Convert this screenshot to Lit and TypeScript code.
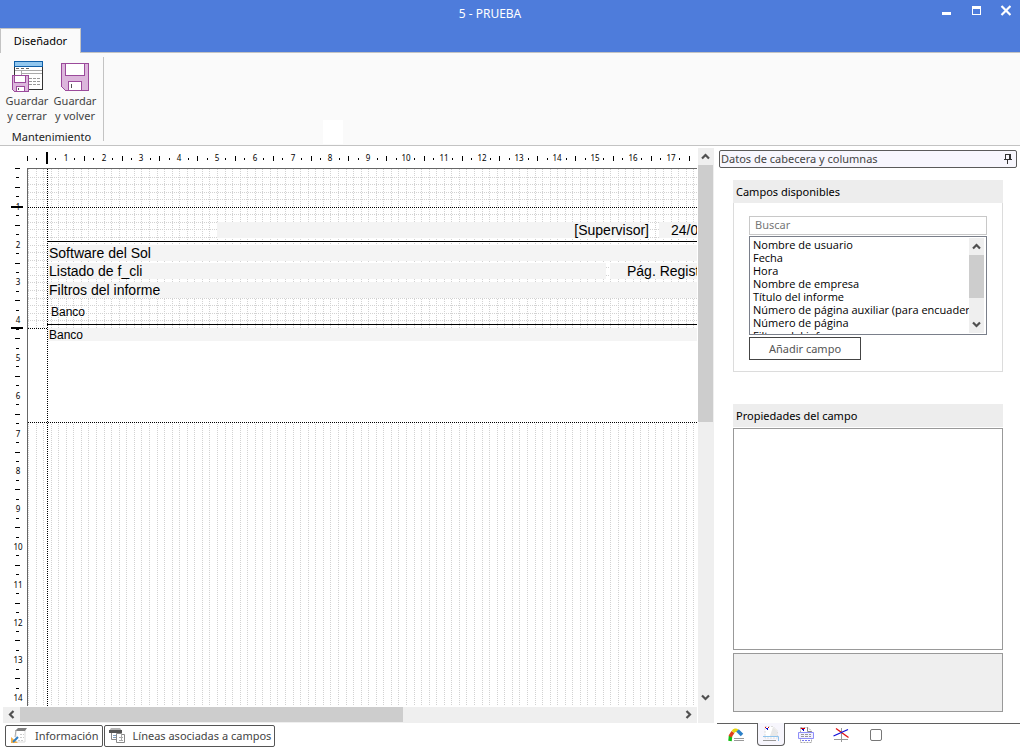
import { LitElement, html, svg, css } from "lit";
import { customElement, state } from "lit/decorators.js";

/** Pixels per centimetre on the design surface. */
const CM = 37.8;
/** Spacing of the snap grid (2 mm). */
const GRID = CM / 5;

const base = css`
  * { box-sizing: border-box; }
  button, input, select {
    font: inherit;
    color: inherit;
    margin: 0;
  }
  button {
    background: none;
    border: 0;
    padding: 0;
    cursor: default;
  }
  svg { display: block; }
`;

const range = (n: number) => Array.from({ length: Math.max(0, n) }, (_, i) => i);

const arrow = (d: string) => html`
  <svg width="9" height="9" viewBox="0 0 9 9" aria-hidden="true">
    <path d=${d} fill="none" stroke="#505050" stroke-width="2.2" />
  </svg>`;
const UP = "M1 6.5L4.5 3L8 6.5";
const DOWN = "M1 2.5L4.5 6L8 2.5";
const LEFT = "M6.5 1L3 4.5L6.5 8";
const RIGHT = "M2.5 1L6 4.5L2.5 8";

@customElement("scroll-track")
class ScrollTrack extends LitElement {
  static properties = { horizontal: { type: Boolean, reflect: true }, size: { type: String } };
  declare horizontal: boolean;
  declare size: string;

  static styles = [base, css`
    :host {
      display: flex;
      flex-direction: column;
      width: 15px;
      background: #efefef;
    }
    :host([horizontal]) {
      flex-direction: row;
      width: auto;
      height: 16px;
    }
    .arrow {
      flex: none;
      width: 15px;
      height: 17px;
      display: grid;
      place-items: center;
    }
    :host([horizontal]) .arrow { width: 17px; height: 15px; }
    .rail { flex: 1; min-height: 0; min-width: 0; }
    .thumb { background: #cdcdcd; width: 15px; height: 100%; }
    :host([horizontal]) .thumb { height: 15px; }
  `];

  render() {
    const h = this.horizontal;
    return html`
      <button class="arrow" tabindex="-1" aria-label=${h ? "Izquierda" : "Arriba"}>${arrow(h ? LEFT : UP)}</button>
      <div class="rail"><div class="thumb" style=${h ? `width:${this.size}` : `height:${this.size}`}></div></div>
      <button class="arrow" tabindex="-1" aria-label=${h ? "Derecha" : "Abajo"}>${arrow(h ? RIGHT : DOWN)}</button>
    `;
  }
}

@customElement("title-bar")
class TitleBar extends LitElement {
  static styles = [base, css`
    :host { display: block; background: #4e7cdb; color: #fff; }
    .row { display: flex; height: 28px; padding-left: 50px; }
    h1 {
      flex: 1;
      margin: 0;
      font-size: 12px;
      font-weight: 400;
      line-height: 28px;
      text-align: center;
    }
    .control { width: 30px; height: 22px; display: grid; place-items: center; }
    .tabs { display: flex; height: 25px; border-bottom: 1px solid #c3c3c3; }
    .tab {
      width: 81px;
      height: 25px;
      padding-bottom: 1px;
      background: #fafafa;
      border: 1px solid #c3c3c3;
      border-bottom: 0;
      color: #000;
    }
  `];

  render() {
    return html`
      <div class="row">
        <h1>5 - PRUEBA</h1>
        <button class="control" aria-label="Minimizar">
          <svg width="12" height="12" viewBox="0 0 12 12"><path d="M3 7h9v3H3z" fill="#fff" /></svg>
        </button>
        <button class="control" aria-label="Maximizar">
          <svg width="12" height="12" viewBox="0 0 12 12"><path fill-rule="evenodd" d="M3 1h9v9H3zM4 4v5h7V4z" fill="#fff" /></svg>
        </button>
        <button class="control" aria-label="Cerrar">
          <svg width="12" height="12" viewBox="0 0 12 12"><path d="M2.500 1L11.500 10M11.500 1L2.500 10" stroke="#fff" stroke-width="2.2" /></svg>
        </button>
      </div>
      <div class="tabs"><button class="tab">Diseñador</button></div>
    `;
  }
}

@customElement("ribbon-bar")
class RibbonBar extends LitElement {
  static styles = [base, css`
    :host {
      display: flex;
      height: 93px;
      background: #fafafa;
      border-bottom: 1px solid #c3c3c3;
    }
    .group {
      width: 104px;
      margin: 4px 0;
      padding-left: 3px;
      border-right: 1px solid #c3c3c3;
    }
    .tools { display: flex; }
    .tool {
      width: 48px;
      height: 69px;
      display: flex;
      flex-direction: column;
      align-items: center;
      padding-top: 3px;
      line-height: 15px;
      color: #444;
    }
    .caption { width: 97px; text-align: center; line-height: 16px; color: #222; margin-top: 3px; }
    .slot { width: 20px; height: 24px; margin: 0 0 1px 219px; align-self: flex-end; background: #fff; }
  `];

  render() {
    return html`
      <div class="group">
        <div class="tools">
          <button class="tool">
            <svg width="32" height="33" viewBox="0 0 32 33" shape-rendering="crispEdges">
              <path d="M3.500 6.500H31.500V29.500H3.500z" fill="#fff" stroke="#333" />
              <path d="M3.500 1.500H31.500V6.500H3.500z" fill="#92c7ee" stroke="#0f5fa8" />
              <path d="M5 8.500h3M10 8.500h3M15 8.500h3" stroke="#666" />
              <path d="M4 10.500h27M10 13.500h21M10.500 11v5" stroke="#aaa" />
              <path d="M18 18.500h3M22 18.500h3M26 18.500h3M18 21.500h3M22 21.500h3M26 21.500h3M18 24.500h3M22 24.500h3M26 24.500h3" stroke="#999" />
              <path d="M1.500 15.500H17.500V31.500H3.500L1.500 29.500z" fill="#dcb6dc" stroke="#9b4a9b" />
              <path d="M3.500 15.500H14.500V22.500H3.500zM5.500 26.500H13.500V31.500H5.500z" fill="#fff" stroke="#9b4a9b" />
              <path d="M7.500 28v2" stroke="#555" />
            </svg>
            <span>Guardar<br />y cerrar</span>
          </button>
          <button class="tool">
            <svg width="32" height="33" viewBox="0 0 32 33" shape-rendering="crispEdges">
              <path d="M2.500 3.500H29.500V30.500H6.500L2.500 26.500z" fill="#dcb6dc" stroke="#9b4a9b" />
              <path d="M6.500 3.500H25.500V15.500H6.500zM9.500 21.500H22.500V30.500H9.500z" fill="#fff" stroke="#9b4a9b" />
              <path d="M12.500 24v4" stroke="#555" />
            </svg>
            <span>Guardar<br />y volver</span>
          </button>
        </div>
        <div class="caption">Mantenimiento</div>
      </div>
      <div class="slot"></div>
    `;
  }
}

@customElement("report-designer")
class ReportDesigner extends LitElement {
  @state() private viewWidth = 0;
  @state() private viewHeight = 0;

  private observer = new ResizeObserver(() => this.measure());

  private measure() {
    this.viewWidth = this.clientWidth;
    this.viewHeight = this.clientHeight;
  }

  connectedCallback() {
    super.connectedCallback();
    this.observer.observe(this);
  }

  disconnectedCallback() {
    this.observer.disconnect();
    super.disconnectedCallback();
  }

  firstUpdated() {
    this.measure();
  }

  static styles = [base, css`
    :host {
      display: grid;
      grid-template-columns: 27px minmax(0, 1fr) 17px;
      grid-template-rows: 22px minmax(0, 1fr) 17px;
      min-width: 0;
      min-height: 0;
    }
    .ruler { overflow: hidden; min-width: 0; min-height: 0; }
    .ruler-top { grid-column: 1 / 3; grid-row: 1; }
    .ruler-left { grid-column: 1; grid-row: 2; }
    .label { font: 8px "Noto Sans", sans-serif; fill: #000; text-anchor: middle; }
    .surface {
      grid-column: 2;
      grid-row: 2;
      display: grid;
      overflow: hidden;
      border: solid #666;
      border-width: 1px 0 0 1px;
      min-width: 0;
      min-height: 0;
      font-family: "Liberation Sans", Arial, sans-serif;
      font-size: 14px;
      color: #000;
      white-space: nowrap;
    }
    .surface > * { grid-area: 1 / 1; min-width: 0; min-height: 0; }
    .bands { padding-left: 20px; overflow: hidden; }
    .margin { height: 39px; }
    .header { padding-top: 14px; }
    .row { display: flex; gap: 4px; height: 16px; width: 740px; line-height: 17px; }
    .field { background: #f4f4f4; padding: 0 1px; }
    .grow { flex: 1; }
    .first { padding-left: 169px; gap: 10px; }
    .user { width: 432px; text-align: right; padding: 0; }
    .date { padding-left: 12px; }
    .rule { height: 1px; background: #000; margin: 3px 0 3px -1px; }
    .company { margin-bottom: 2px; }
    .list { margin-bottom: 3px; }
    .title { width: 558px; }
    .page { padding-left: 17px; }
    .column { height: 26px; margin-bottom: -3px; padding: 0 3px; font-size: 12px; line-height: 29px; }
    .detail { height: 13px; line-height: 15px; font-size: 12px; }
    .bar-v {
      grid-column: 3;
      grid-row: 1 / 4;
      margin: 2px 0 0 1px;
      display: flex;
      flex-direction: column;
      background: #efefef;
    }
    .bar-v scroll-track { flex: 1; min-height: 0; }
    .corner { height: 17px; }
    .bar-h { grid-column: 1 / 3; grid-row: 3; margin: 0 0 0 3px; padding-top: 1px; }
  `];

  private topRuler() {
    const count = Math.floor(((this.viewWidth - 46) / CM) * 4) + 1;
    return svg`${range(count).map((i) => {
      const x = Math.round(28 + (i * CM) / 4);
      if (i === 2) return svg`<rect x="46" y="6" width="2" height="12" />`;
      if (i && i % 4 === 0) return svg`<text class="label" x=${x} y="15">${i / 4}</text>`;
      return i % 2
        ? svg`<rect x=${x - 1} y="12" width="1" height="2" />`
        : svg`<rect x=${x - 1} y="10" width="1" height="5" />`;
    })}`;
  }

  private leftRuler() {
    const count = Math.floor(((this.viewHeight - 46) / CM) * 4) + 1;
    return svg`
      ${range(count).map((i) => {
        const y = Math.round((i * CM) / 4);
        if (i && i % 4 === 0) return svg`<text class="label" x="18" y=${y + 4}>${i / 4}</text>`;
        return i % 2
          ? svg`<rect x="16" y=${y} width="3" height="1" />`
          : svg`<rect x="15" y=${y} width="5" height="1" />`;
      })}
      <rect x="11" y="38" width="12" height="2" />
      <rect x="11" y="159" width="12" height="2" />`;
  }

  private grid() {
    const cols = range(Math.ceil(this.viewWidth / GRID)).map((i) => Math.round(i * GRID) + 0.5);
    const rows = range(21).slice(1).map((i) => Math.round(i * GRID) + 0.5).filter((y) => y !== 38.5);
    return svg`
      <g stroke="#d2d2d2" stroke-dasharray="1 1">
        ${cols.map((x) => svg`<path d=${`M${x} 0V159M${x} 255V2400`} />`)}
        ${rows.map((y) => svg`<path d=${`M0 ${y}H2400`} />`)}
      </g>
      <g stroke="#000" stroke-dasharray="1 1">
        <path d="M0 38.500H2400" />
        <path d="M0 159.500H20" />
        <path d="M0 253.500H2400" />
        <path d="M19.500 0V2400" />
      </g>`;
  }

  render() {
    return html`
      <div class="ruler ruler-top">
        <svg width="100%" height="22" aria-hidden="true">${this.topRuler()}</svg>
      </div>
      <div class="ruler ruler-left">
        <svg width="27" height="100%" aria-hidden="true">${this.leftRuler()}</svg>
      </div>
      <div class="surface">
        <svg width="100%" height="100%" shape-rendering="crispEdges" aria-hidden="true">${this.grid()}</svg>
        <div class="bands">
          <div class="margin"></div>
          <div class="header">
            <div class="row first">
              <div class="field user">[Supervisor]</div>
              <div class="field date grow">24/06</div>
            </div>
            <div class="rule"></div>
            <div class="row company"><div class="field grow">Software del Sol</div></div>
            <div class="row list">
              <div class="field title">Listado de f_cli</div>
              <div class="field page grow">Pág. Regist</div>
            </div>
            <div class="row"><div class="field grow">Filtros del informe</div></div>
            <div class="column">Banco</div>
            <div class="rule"></div>
          </div>
          <div class="row detail"><div class="field grow">Banco</div></div>
        </div>
      </div>
      <div class="bar-v">
        <scroll-track size="49%"></scroll-track>
        <div class="corner"></div>
      </div>
      <div class="bar-h"><scroll-track horizontal size="58%"></scroll-track></div>
    `;
  }
}

@customElement("field-panel")
class FieldPanel extends LitElement {
  @state() private tab = 1;

  private fields = [
    "Nombre de usuario",
    "Fecha",
    "Hora",
    "Nombre de empresa",
    "Título del informe",
    "Número de página auxiliar (para encuadernar)",
    "Número de página",
    "Filtros del informe",
  ];

  static styles = [base, css`
    :host { display: flex; flex-direction: column; padding: 4px 0 0 3px; min-height: 0; }
    .head {
      display: flex;
      align-items: center;
      justify-content: space-between;
      height: 18px;
      margin: 0 3px 12px 2px;
      padding: 0 4px 2px 1px;
      border: 1px solid #5a5a5a;
      border-radius: 2px;
      background: #f7f6fd;
      color: #444;
    }
    h2, h3 { margin: 0; font-size: 11px; font-weight: 400; }
    h3 {
      height: 23px;
      line-height: 23px;
      padding-left: 3px;
      background: #ededed;
      color: #000;
    }
    .content { flex: 1; display: flex; flex-direction: column; margin: 0 17px 11px 16px; min-height: 0; }
    .available { border: 1px solid #dcdcdc; border-top: 0; padding: 13px 15px 11px; margin-bottom: 32px; }
    .search {
      display: block;
      width: 100%;
      height: 19px;
      padding: 0 5px 2px;
      border: 1px solid #c8c8c8;
      background: #fff;
      outline: none;
    }
    .search::placeholder { color: #777; opacity: 1; }
    .listbox {
      display: flex;
      height: 99px;
      margin: 1px 0 2px;
      padding-right: 2px;
      border: 1px solid #7a7f8a;
      background: #fff;
    }
    select {
      flex: 1;
      min-width: 0;
      height: 97px;
      padding: 0;
      border: 0;
      outline: none;
      background: none;
      overflow: hidden;
      color: #000;
      font-family: "Open Sans", "Noto Sans", sans-serif;
      scrollbar-width: none;
    }
    .listbox scroll-track { margin: 1px 0; }
    option { padding: 0 0 0 3px; height: 13px; min-height: 13px; line-height: 13px; }
    .add {
      display: block;
      width: 112px;
      height: 23px;
      border: 1px solid #444;
      background: #fff;
      color: #555;
    }
    .props { flex: 1; min-height: 0; margin-top: 1px; border: 1px solid #999; }
    .help { height: 59px; margin-top: 3px; border: 1px solid #999; background: #efefef; }
    .tabs { display: flex; height: 25px; border-top: 1px solid #5f5f5f; padding-left: 1px; }
    .tab { width: 35px; height: 22px; display: grid; place-items: center; }
    .tab.on {
      width: 28px;
      margin: -1px 3px 0 4px;
      height: 23px;
      border: 1px solid #5f5f5f;
      border-top: 0;
      border-radius: 0 0 4px 4px;
      background: #f7f6fd;
    }
  `];

  private icons = [
    html`<svg width="16" height="16" viewBox="0 0 16 16">
      <path d="M2 14L2.500 9" stroke="#10c010" stroke-width="3.500" />
      <path d="M2 9.500L5 5" stroke="#e0401c" stroke-width="3.500" />
      <path d="M5 5Q7 2 9.500 4" fill="none" stroke="#e6d410" stroke-width="3.500" />
      <path d="M9.500 3.500L14 8" stroke="#2c80c8" stroke-width="3.500" />
      <path d="M6 11.500h10M6 13.500h10" stroke="#999" />
    </svg>`,
    html`<svg width="16" height="16" viewBox="0 0 16 16">
      <path d="M2 .5H10L14.500 5V12H2z" fill="#fff" stroke="#dcdcdc" stroke-dasharray="2 1" />
      <path d="M10 1L14 5V10H7z" fill="#e8e8e8" />
      <path d="M2 1.500h1M5 1.500h1" stroke="#d00" />
      <path d="M3 2.500h2M4 3.500h1" stroke="#00c" />
      <path d="M0 10.500H15.500V15" fill="none" stroke="#8fc3ee" />
      <path d="M0 14.500H13" stroke="#999" />
    </svg>`,
    html`<svg width="18" height="16" viewBox="0 0 18 16">
      <path d="M3.500 .5H11L14.500 4V15.500H3.500z" fill="#fff" stroke="#aaa" stroke-dasharray="2 1" />
      <path d="M10.500 .5V4.500H14.500" fill="none" stroke="#888" />
      <path d="M4 1.500h4" stroke="#d00" />
      <path d="M5 2.500h2M6 3.500h1" stroke="#00c" />
      <path d="M1.500 5.500H16.500V11.500H1.500z" fill="#f1f0ff" stroke="#8f8ff8" />
      <path d="M4 7.500h10M4 9.500h10" stroke="#999" stroke-dasharray="3 1" />
      <path d="M5 13.500h9" stroke="#7777f0" stroke-dasharray="2 1" />
    </svg>`,
    html`<svg width="16" height="16" viewBox="0 0 16 16">
      <path d="M8.500 1V15M1 12.500H15" stroke="#999" />
      <path d="M3 1.500L15.500 10.500" stroke="#e01010" stroke-width="1.300" />
      <path d="M.5 9L15 2.500" stroke="#1010d8" stroke-width="1.300" />
    </svg>`,
    html`<svg width="14" height="14" viewBox="0 0 14 14">
      <rect x="1.500" y="1.500" width="11" height="11" rx="1.500" fill="#fff" stroke="#777" />
    </svg>`,
  ];

  render() {
    return html`
      <div class="head">
        <h2>Datos de cabecera y columnas</h2>
        <button aria-label="Fijar panel">
          <svg width="9" height="12" viewBox="0 0 9 12"><path d="M2 2.500H7M2.500 2V7.500M6.500 2V7.500M7.500 2V7.500M1 7.500H9M4.500 8V12" fill="none" stroke="#333" /></svg>
        </button>
      </div>
      <div class="content">
        <h3>Campos disponibles</h3>
        <div class="available">
          <input class="search" type="text" placeholder="Buscar" aria-label="Buscar" />
          <div class="listbox">
            <select size="7" aria-label="Campos disponibles">
              ${this.fields.map((f) => html`<option>${f}</option>`)}
            </select>
            <scroll-track size="70%"></scroll-track>
          </div>
          <button class="add">Añadir campo</button>
        </div>
        <h3>Propiedades del campo</h3>
        <div class="props"></div>
        <div class="help"></div>
      </div>
      <div class="tabs" role="tablist">
        ${this.icons.map((icon, i) => html`
          <button class="tab ${i === this.tab ? "on" : ""}" role="tab" aria-label="Panel ${i + 1}"
            @click=${() => (this.tab = i)}>${icon}</button>`)}
      </div>
    `;
  }
}

@customElement("app-root")
class AppRoot extends LitElement {
  static styles = [base, css`
    :host {
      display: flex;
      flex-direction: column;
      height: 100vh;
      overflow: hidden;
      background: #fff;
      font-family: "Noto Sans", "Open Sans", sans-serif;
      font-size: 11px;
      color: #222;
    }
    .main { flex: 1; min-height: 0; display: flex; }
    .work { flex: 1; min-width: 0; display: flex; flex-direction: column; }
    report-designer { flex: 1; }
    field-panel { width: 306px; flex: none; }
    .links { display: flex; gap: 1px; height: 25px; padding: 2px 0 1px 5px; }
    .link {
      display: flex;
      align-items: center;
      gap: 7px;
      height: 22px;
      padding: 0 3px 1px 5px;
      border: 1px solid #555;
      border-radius: 2px;
      color: #444;
      background: #fff;
    }
    .lines { padding: 0 3px 1px 4px; }
  `];

  render() {
    return html`
      <title-bar></title-bar>
      <ribbon-bar></ribbon-bar>
      <div class="main">
        <div class="work">
          <report-designer></report-designer>
          <div class="links">
            <button class="link">
              <svg width="17" height="17" viewBox="0 0 17 17">
                <path d="M5 3V15H14V4" fill="#fff" stroke="#ddd" />
                <path d="M7 1H16L14 4H4z" fill="#808080" />
                <path d="M5 3L4 10" stroke="#aaa" />
                <path d="M9 7.500h4M9 10.500h4M7 13.500h6" stroke="#ccc" stroke-dasharray="2 1" />
                <path d="M0 10V16H7z" fill="#f3b04b" />
                <path d="M2 15L7 10" stroke="#2f7fc4" stroke-width="2" />
              </svg>
              Información
            </button>
            <button class="link lines">
              <svg width="17" height="17" viewBox="0 0 17 17">
                <path d="M2 1H11L13 4H0z" fill="#b5b5b5" />
                <path d="M0 3H13V6H0z" fill="#555" />
                <path d="M2.500 6V12.500H9" fill="#fff" stroke="#888" />
                <path d="M4 8.500h4M4 10.500h3" stroke="#7f9fbf" />
                <path d="M7.500 6.500H12.500V7.500H15.500V15.500H7.500z" fill="#fff" stroke="#888" />
                <path d="M12.500 8V14M10 10.500h4M10 13.500h4" stroke="#aaa" />
              </svg>
              Líneas asociadas a campos
            </button>
          </div>
        </div>
        <field-panel></field-panel>
      </div>
    `;
  }
}
